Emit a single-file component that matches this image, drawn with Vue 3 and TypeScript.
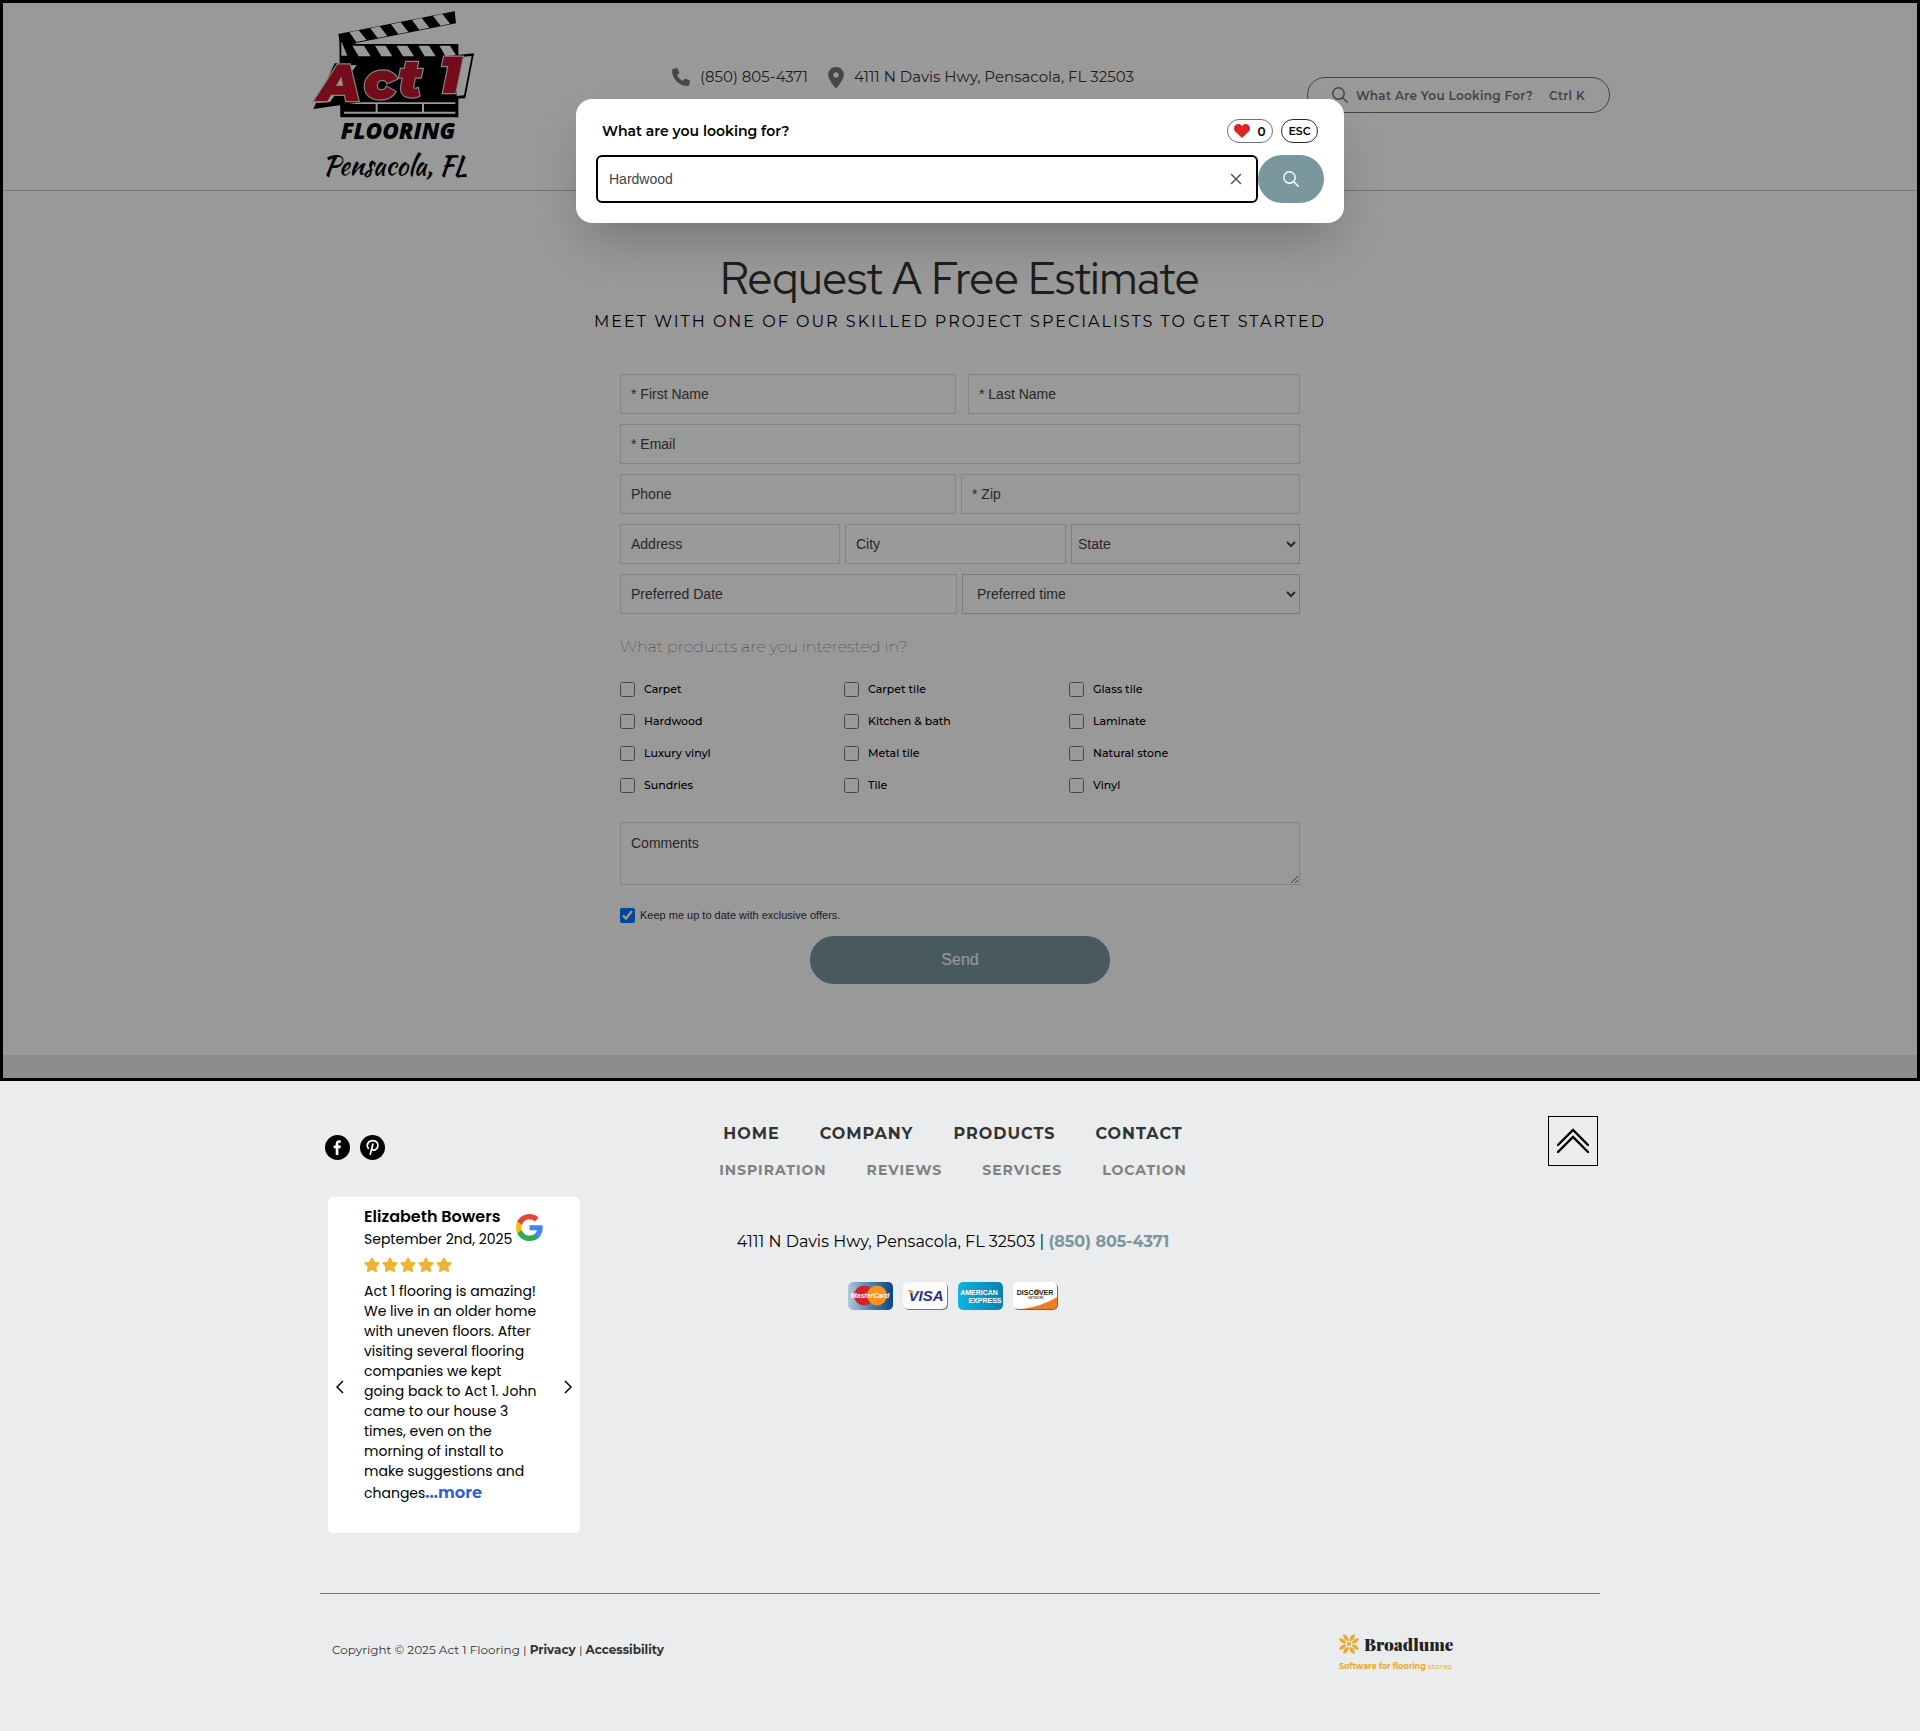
<script setup lang="ts">
import { ref } from 'vue'

interface Product {
  id: string
  label: string
}

const query = ref('Hardwood')
const optIn = ref(true)
const picked = ref<string[]>([])

const products: Product[] = [
  'Carpet', 'Carpet tile', 'Glass tile',
  'Hardwood', 'Kitchen & bath', 'Laminate',
  'Luxury vinyl', 'Metal tile', 'Natural stone',
  'Sundries', 'Tile', 'Vinyl',
].map((label, i) => ({ id: `product-${i}`, label }))

const primaryLinks = ['Home', 'Company', 'Products', 'Contact']
const secondaryLinks = ['Inspiration', 'Reviews', 'Services', 'Location']

const reviewLines = [
  'Act 1 flooring is amazing!',
  'We live in an older home',
  'with uneven floors. After',
  'visiting several flooring',
  'companies we kept',
  'going back to Act 1. John',
  'came to our house 3',
  'times, even on the',
  'morning of install to',
  'make suggestions and',
]
</script>

<template>
  <div class="page">
    <div class="stage">
      <header class="site-header">
        <div class="header-inner">
          <a href="#" class="logo" aria-label="Act 1 Flooring">
            <svg viewBox="0 0 660 600" width="220" height="200">
              <path d="M145 102 L494 34 L498 70 L152 138 Z" fill="#000" />
              <g fill="#fff">
                <path d="M178 97 l28 -6 l24 29 l-31 6 z" />
                <path d="M241 85 l28 -6 l23 29 l-29 6 z" />
                <path d="M303 73 l29 -6 l23 29 l-30 6 z" />
                <path d="M366 60 l29 -6 l23 29 l-30 6 z" />
                <path d="M429 48 l28 -6 l23 29 l-28 6 z" />
              </g>
              <path d="M148 110 L200 132 H505 V352 H151 Z" fill="#000" />
              <g fill="#fff">
                <path d="M154 124 l18 43 h-18 z" />
                <path d="M187 137 h35 l20 32 h-36 z" />
                <path d="M255 137 h32 l20 32 h-33 z" />
                <path d="M320 137 h32 l20 32 h-33 z" />
                <path d="M385 137 h32 l20 32 h-33 z" />
                <path d="M448 137 h32 l20 32 h-33 z" />
                <path d="M162 307 H496 V312 H162 Z M162 335 H496 V341 H162 Z M257 310 h6 v28 h-6 z M396 310 h6 v28 h-6 z" />
              </g>
              <path d="M134 190 L232 188 L222 305 L70 327 Z" fill="#000" />
              <path d="M139 197 L200 195 L120 306 L80 309 Z" fill="#fff" />
              <path d="M470 168 L552 160 L526 295 L440 298 Z" fill="#000" />
              <path d="M500 172 L545 168 L522 286 L500 288 Z" fill="#fff" />
              <g class="logo-act">
                <text x="84" y="304">A</text>
                <text x="221" y="297">c</text>
                <text x="324" y="290">t</text>
                <text x="448" y="280">1</text>
              </g>
              <text x="152" y="418" class="logo-flooring">FLOORING</text>
              <text x="98" y="524" class="logo-city">Pensacola, FL</text>
            </svg>
          </a>

          <div class="contact">
            <a href="#" class="contact-item">
              <svg class="phone" viewBox="0 0 512 512" width="18" height="18" fill="currentColor"><path d="M165 25c-8-19-29-29-49-24l-88 24C12 30 0 46 0 64c0 247 201 448 448 448 18 0 34-12 39-29l24-88c5-20-5-41-24-49l-96-40c-16-7-35-2-46 12l-40 49C234 334 178 278 145 207l49-40c14-11 19-30 12-46z" /></svg>
              <span>(850) 805-4371</span>
            </a>
            <a href="#" class="contact-item">
              <svg viewBox="0 0 384 512" width="16" height="21" fill="currentColor"><path fill-rule="evenodd" d="M216 499C267 435 384 279 384 192 384 86 298 0 192 0S0 86 0 192c0 87 117 243 168 307 12 16 36 16 48 0zM192 128a64 64 0 1 1 0 128 64 64 0 0 1 0-128z" /></svg>
              <span>4111 N Davis Hwy, Pensacola, FL 32503</span>
            </a>
          </div>

          <button type="button" class="search-pill">
            <svg viewBox="0 0 16 16" width="16" height="16" fill="none" stroke="currentColor" stroke-width="1.4" stroke-linecap="round"><circle cx="6.5" cy="6.5" r="5.7" /><path d="M10.7 10.7 L15.3 15.3" /></svg>
            <span>What Are You Looking For?</span>
            <span class="shortcut">Ctrl K</span>
          </button>
        </div>
      </header>

      <main class="main">
        <h1>Request A Free Estimate</h1>
        <p class="subtitle">MEET WITH ONE OF OUR SKILLED PROJECT SPECIALISTS TO GET STARTED</p>

        <form class="estimate" @submit.prevent>
          <div class="row names">
            <input type="text" placeholder="* First Name" aria-label="First Name" />
            <input type="text" placeholder="* Last Name" aria-label="Last Name" />
          </div>
          <div class="row">
            <input type="email" placeholder="* Email" aria-label="Email" />
          </div>
          <div class="row phone-zip">
            <input type="tel" placeholder="Phone" aria-label="Phone" />
            <input type="text" placeholder="* Zip" aria-label="Zip" />
          </div>
          <div class="row address">
            <input type="text" placeholder="Address" aria-label="Address" />
            <input type="text" placeholder="City" aria-label="City" />
            <select aria-label="State"><option>State</option></select>
          </div>
          <div class="row schedule">
            <input type="text" placeholder="Preferred Date" aria-label="Preferred Date" />
            <select class="time" aria-label="Preferred time"><option>Preferred time</option></select>
          </div>

          <fieldset>
            <legend>What products are you interested in?</legend>
            <div class="products">
              <div v-for="p in products" :key="p.id" class="check">
                <input :id="p.id" v-model="picked" type="checkbox" :value="p.label" />
                <label :for="p.id">{{ p.label }}</label>
              </div>
            </div>
          </fieldset>

          <textarea placeholder="Comments" aria-label="Comments"></textarea>

          <div class="check opt-in">
            <input id="opt-in" v-model="optIn" type="checkbox" />
            <label for="opt-in">Keep me up to date with exclusive offers.</label>
          </div>
          <button type="submit" class="send">Send</button>
        </form>
      </main>

      <div class="overlay">
        <div class="dialog" role="dialog" aria-label="Search">
          <div class="dialog-head">
            <label for="site-search">What are you looking for?</label>
            <div class="dialog-actions">
              <button type="button" class="favorites" aria-label="Favorites">
                <svg viewBox="0 0 16 14" width="16" height="14"><path fill="#dc2626" d="M8 14 L1.3 7.6 C-.6 5.6 -.3 2.6 1.5 1.1 C3.5 -.5 6.4 -.2 8 2.1 C9.6 -.2 12.5 -.5 14.5 1.1 C16.3 2.6 16.6 5.6 14.7 7.6 Z" /></svg>
                <span>0</span>
              </button>
              <button type="button" class="esc">ESC</button>
            </div>
          </div>
          <div class="dialog-search">
            <div class="field">
              <input id="site-search" v-model="query" type="text" />
              <button type="button" class="clear" aria-label="Clear" @click="query = ''">
                <svg viewBox="0 0 12 12" width="12" height="12" fill="none" stroke="#4b5563" stroke-width="1.5" stroke-linecap="round"><path d="M1.5 1.5 L10.5 10.5 M10.5 1.5 L1.5 10.5" /></svg>
              </button>
            </div>
            <button type="button" class="go" aria-label="Search">
              <svg viewBox="0 0 16 16" width="16" height="16" fill="none" stroke="#fff" stroke-width="1.4" stroke-linecap="round"><circle cx="6.5" cy="6.5" r="5.7" /><path d="M10.7 10.7 L15.3 15.3" /></svg>
            </button>
          </div>
        </div>
      </div>
    </div>

    <footer class="footer">
      <div class="footer-top">
        <div class="footer-left">
          <div class="social">
            <a href="#" aria-label="Facebook">
              <svg viewBox="0 0 25 25" width="25" height="25"><circle cx="12.5" cy="12.5" r="12.5" /><path fill="#fff" d="M10.7 20 V13.2 H8.7 V10.6 H10.7 V8.7 C10.7 6.5 12 5.3 14 5.3 C15 5.3 15.7 5.4 15.9 5.4 V7.7 H14.6 C13.6 7.7 13.4 8.2 13.4 8.9 V10.6 H15.8 L15.5 13.2 H13.4 V20 Z" /></svg>
            </a>
            <a href="#" aria-label="Pinterest">
              <svg viewBox="0 0 25 25" width="25" height="25"><circle cx="12.5" cy="12.5" r="12.5" /><path fill="none" stroke="#fff" stroke-width="1.7" stroke-linecap="round" d="M8.3 13.3 C5.8 9.5 8.5 5.7 12.8 5.7 C16.7 5.7 18.6 8.6 17.7 11.8 C16.9 14.9 13.5 16.2 11.9 13.9 M12.9 9 L10.3 19.3" /></svg>
            </a>
          </div>

          <article class="review">
            <button type="button" class="arrow" aria-label="Previous review">
              <svg viewBox="0 0 8 14" width="8" height="14"><path d="M7 1 L1 7 L7 13" /></svg>
            </button>
            <div class="review-body">
              <div class="review-head">
                <div>
                  <h2>Elizabeth Bowers</h2>
                  <time datetime="2025-09-02">September 2nd, 2025</time>
                </div>
                <svg class="google" viewBox="0 0 48 48" width="27" height="27">
                  <path fill="#4285f4" d="M47.5 24.5c0-1.6-.1-3.2-.4-4.7H24v9h13.2c-.6 3-2.3 5.6-4.9 7.3v6h7.9c4.6-4.2 7.3-10.5 7.3-17.6z" />
                  <path fill="#34a853" d="M24 48c6.6 0 12.2-2.2 16.2-5.9l-7.9-6c-2.2 1.5-5 2.3-8.3 2.3-6.4 0-11.8-4.3-13.7-10.1H2.2v6.2C6.2 42.6 14.5 48 24 48z" />
                  <path fill="#fbbc05" d="M10.3 28.3c-.5-1.5-.8-2.9-.8-4.3s.3-2.9.8-4.3v-6.2H2.2C.8 16.7 0 20.2 0 24s.8 7.3 2.2 10.5z" />
                  <path fill="#ea4335" d="M24 9.5c3.6 0 6.8 1.2 9.3 3.7l7-7C36.2 2.4 30.6 0 24 0 14.5 0 6.2 5.4 2.2 13.5l8.1 6.2C12.2 13.8 17.6 9.5 24 9.5z" />
                </svg>
              </div>
              <div class="stars" role="img" aria-label="5 out of 5">
                <svg v-for="n in 5" :key="n" viewBox="0 0 16 16" width="16" height="16"><path fill="#eeb333" stroke="#eeb333" stroke-width="2" stroke-linejoin="round" d="M8 1.5 L10 5.7 L14.6 6.3 L11.3 9.5 L12.1 14.1 L8 11.9 L3.9 14.1 L4.7 9.5 L1.4 6.3 L6 5.7 Z" /></svg>
              </div>
              <p><template v-for="line in reviewLines" :key="line">{{ line }}<br /></template><span>changes</span><a href="#">...more</a></p>
            </div>
            <button type="button" class="arrow" aria-label="Next review">
              <svg viewBox="0 0 8 14" width="8" height="14"><path d="M1 1 L7 7 L1 13" /></svg>
            </button>
          </article>
        </div>

        <div class="footer-center">
          <nav class="primary">
            <a v-for="l in primaryLinks" :key="l" href="#">{{ l }}</a>
          </nav>
          <nav class="secondary">
            <a v-for="l in secondaryLinks" :key="l" href="#">{{ l }}</a>
          </nav>
          <p class="where">4111 N Davis Hwy, Pensacola, FL 32503 | <a href="#">(850) 805-4371</a></p>
          <div class="cards">
            <svg viewBox="0 0 45 28" width="45" height="28" role="img" aria-label="MasterCard">
              <defs><linearGradient id="mc"><stop offset="0" stop-color="#b5c6dc" /><stop offset=".5" stop-color="#4f7fae" /><stop offset="1" stop-color="#0b4781" /></linearGradient></defs>
              <rect width="45" height="28" rx="5" fill="url(#mc)" />
              <circle cx="16" cy="13.5" r="10" fill="#d2232a" /><circle cx="29" cy="13.5" r="10" fill="#f7941d" />
              <text x="22" y="16" class="mc">MasterCard</text>
            </svg>
            <svg viewBox="0 0 45 28" width="45" height="28" role="img" aria-label="Visa">
              <rect x="1" y="1" width="44" height="27" rx="5" fill="#777" /><rect width="44" height="27" rx="5" fill="#fbfbfc" />
              <text x="23" y="19" class="visa">VISA</text><path d="M4 8 L9 8 L11 13 Z" fill="#f0a32b" />
            </svg>
            <svg viewBox="0 0 45 28" width="45" height="28" role="img" aria-label="American Express">
              <defs><linearGradient id="ax"><stop offset="0" stop-color="#12b4e2" /><stop offset="1" stop-color="#0b7fae" /></linearGradient></defs>
              <rect width="45" height="28" rx="5" fill="url(#ax)" />
              <text x="21" y="13" class="amex">AMERICAN</text><text x="27" y="21" class="amex">EXPRESS</text>
            </svg>
            <svg viewBox="0 0 45 28" width="45" height="28" role="img" aria-label="Discover">
              <rect x="1" y="1" width="44" height="27" rx="5" fill="#666" /><rect width="44" height="27" rx="5" fill="#fff" />
              <path d="M9 27 Q30 24 44 15 V22 Q44 27 39 27 Z" fill="#ef7b22" />
              <circle cx="24" cy="10" r="3" fill="#f39a4e" />
              <text x="22" y="13" class="discover">DISCOVER</text><text x="23" y="17" class="network">NETWORK</text>
            </svg>
          </div>
        </div>

        <a href="#" class="to-top" aria-label="Back to top">
          <svg viewBox="0 0 32 26" width="32" height="26" fill="none" stroke="#000" stroke-width="2.4" stroke-linecap="round"><path d="M1 17 L16 2 L31 17 M1 24 L16 9 L31 24" /></svg>
        </a>
      </div>

      <div class="footer-bottom">
        <p>Copyright © 2025 Act 1 Flooring | <a href="#">Privacy</a> | <a href="#">Accessibility</a></p>
        <a href="#" class="broadlume">
          <span class="brand">
            <svg viewBox="0 0 20 20" width="20" height="20" fill="#e9a92f">
              <rect x="8.2" y="8.2" width="3.6" height="3.6" />
              <g v-for="a in [0, 90, 180, 270]" :key="a" :transform="`rotate(${a} 10 10)`">
                <path d="M9.5 7 C6 7 3.8 3.2 4.2 .2 C7.6 .4 10 3.5 9.5 7 Z" />
                <path d="M10.5 7 C14 7 16.2 3.2 15.8 .2 C12.4 .4 10 3.5 10.5 7 Z" />
              </g>
            </svg>
            <span>Broadlume</span>
          </span>
          <span class="tagline"><b>Software for flooring</b> stores</span>
        </a>
      </div>
    </footer>
  </div>
</template>

<style>
body {
  margin: 0;
}
</style>

<style scoped>
* {
  box-sizing: border-box;
}
.page {
  font-family: Montserrat, Inter, sans-serif;
  color: #000;
  background: #ebeced;
}
.page a {
  color: inherit;
  text-decoration: none;
}
button {
  font-family: inherit;
  cursor: pointer;
}
h1, h2, p {
  margin: 0;
}

/* header */
.stage {
  position: relative;
  padding-bottom: 26px;
}
.site-header {
  background: #fff;
  border-bottom: 1px solid #c4c4c4;
}
.header-inner {
  max-width: 1340px;
  margin: 0 auto;
  padding-right: 20px;
  height: 190px;
  overflow: hidden;
  display: grid;
  grid-template-columns: 382px 1fr auto;
  align-items: start;
}
.logo-act text {
  font: italic 900 158px Montserrat, sans-serif;
  fill: #c3142b;
  stroke: #ddd;
  stroke-width: 7px;
  paint-order: stroke;
}
.logo-flooring {
  font: italic 800 68px "Open Sans", sans-serif;
}
.logo-city {
  font: 400 79px "Kaushan Script", "Dancing Script", Pacifico, "Liberation Serif", cursive;
}
.contact {
  display: flex;
  gap: 20px;
  padding-top: 65px;
  color: #333;
  font-size: 15px;
  line-height: 24px;
}
.contact-item {
  display: flex;
  align-items: center;
  gap: 10px;
}
.contact-item svg {
  color: #777;
}
.search-pill {
  display: flex;
  align-items: center;
  gap: 8px;
  height: 36px;
  margin-top: 77px;
  padding: 0 24px;
  border: 1px solid #6b7280;
  border-radius: 18px;
  background: none;
  color: #6b7280;
  font-size: 12px;
  font-weight: 600;
  letter-spacing: 0.025em;
}
.shortcut {
  margin-left: 8px;
}

/* estimate form */
.main {
  background: #fff;
  padding: 59px 20px 71px;
  display: flex;
  flex-direction: column;
  align-items: center;
}
h1 {
  font: 400 44px/56px "Red Hat Display", Lato, sans-serif;
  color: #333;
}
.subtitle {
  margin-top: 4px;
  font-size: 16px;
  line-height: 24px;
  letter-spacing: 2px;
}
.estimate {
  width: 100%;
  max-width: 680px;
  margin-top: 40px;
  display: flex;
  flex-direction: column;
}
.row {
  display: grid;
  grid-auto-flow: column;
  grid-auto-columns: 1fr;
  gap: 5px;
  margin-bottom: 10px;
}
.row.names {
  grid-template-columns: 336px 1fr;
  gap: 12px;
}
.row.phone-zip {
  grid-template-columns: 336px 1fr;
}
.row.address {
  grid-template-columns: 220px 221px 1fr;
}
.row.schedule {
  grid-template-columns: 337px 1fr;
}
.row input, .row select, textarea {
  font: 14px "Liberation Sans", Arial, sans-serif;
  color: #444;
  background: #fff;
  border: 1px solid #ddd;
  border-radius: 0;
  height: 40px;
  min-width: 0;
  padding: 0 10px;
}
.row select {
  border-color: #ccc;
  padding: 0 2px;
}
.row select.time {
  padding: 0 10px;
}
::placeholder {
  color: #444;
  opacity: 1;
}
fieldset {
  border: 0;
  margin: 11px 0 0;
  padding: 0;
}
legend {
  padding: 0;
  margin-bottom: 14px;
  font-size: 16px;
  font-weight: 100;
  line-height: 24px;
  color: #333;
}
.products {
  display: grid;
  grid-template-columns: 224px 225px 1fr;
}
.check {
  display: flex;
  align-items: center;
  height: 32px;
  gap: 9px;
  font-size: 11px;
  font-weight: 500;
}
.check input {
  width: 15px;
  height: 15px;
  margin: 0;
}
textarea {
  height: 63px;
  padding: 12px 10px;
  margin-top: 21px;
}
.check.opt-in {
  gap: 5px;
  margin: 14px 0 5px;
  font-family: "Liberation Sans", Arial, sans-serif;
  font-weight: 400;
  color: #333;
}
.send {
  width: 300px;
  height: 48px;
  align-self: center;
  border: 0;
  border-radius: 24px;
  background: #7a979f;
  color: #fff;
  font: 16px "Liberation Sans", Arial, sans-serif;
}

/* search overlay */
.overlay {
  position: absolute;
  inset: 0;
  border: 3px solid #000;
  background: rgba(0, 0, 0, 0.4);
  padding: 96px 20px 0;
}
.dialog {
  max-width: 768px;
  margin: 0 auto;
  padding: 20px;
  background: #fff;
  border-radius: 16px;
  box-shadow: 0 25px 50px -12px rgba(0, 0, 0, 0.25);
}
.dialog-head {
  display: flex;
  align-items: center;
  justify-content: space-between;
  height: 24px;
  margin: 0 6px 12px;
  font-size: 14px;
  font-weight: 600;
}
.dialog-actions {
  display: flex;
  gap: 8px;
}
.dialog-actions button {
  display: flex;
  align-items: center;
  justify-content: center;
  height: 24px;
  border: 1px solid #6b7280;
  border-radius: 12px;
  background: #fff;
  color: #000;
  font-size: 12px;
  font-weight: 600;
  padding: 0 6px;
}
.dialog-actions .favorites {
  gap: 7px;
  width: 46px;
}
.dialog-actions .esc {
  width: 37px;
  border-color: #1f2937;
  font-size: 11px;
}
.dialog-search {
  display: flex;
}
.field {
  flex: 1;
  display: flex;
  align-items: center;
  height: 48px;
  border: 2px solid #000;
  border-radius: 6px;
}
.field input {
  flex: 1;
  border: 0;
  outline: 0;
  padding: 0 11px;
  background: none;
  font: 14px "Liberation Sans", Arial, sans-serif;
  color: #444;
}
.clear {
  display: flex;
  border: 0;
  background: none;
  padding: 0 14px;
}
.go {
  width: 66px;
  display: flex;
  align-items: center;
  justify-content: center;
  border: 0;
  border-radius: 24px;
  background: #7a979f;
}

/* footer */
.footer {
  max-width: 1280px;
  margin: 0 auto;
}
.footer-top {
  display: grid;
  grid-template-columns: 300px 1fr 314px;
  padding: 35px 0 60px;
  border-bottom: 1px solid #73767b;
}
.social {
  display: flex;
  gap: 10px;
  padding: 19px 5px 37px;
}
.social svg {
  display: block;
}
.review {
  width: 252px;
  height: 336px;
  margin-left: 8px;
  padding: 0 8px;
  display: flex;
  align-items: center;
  background: #fff;
  border-radius: 5px;
  font-family: Poppins, Inter, sans-serif;
}
.arrow {
  border: 0;
  background: none;
  padding: 44px 0 0;
  line-height: 0;
}
.arrow path {
  fill: none;
  stroke: #000;
  stroke-width: 1.5;
}
.review-body {
  flex: 1;
  align-self: flex-start;
  padding: 8px 0 0 20px;
}
.review-head {
  display: flex;
  gap: 4px;
  align-items: center;
  white-space: nowrap;
}
.review-head > div {
  width: 148px;
}
h2 {
  font-size: 16px;
  font-weight: 600;
  line-height: 24px;
}
time {
  display: block;
  font-size: 14px;
  line-height: 20px;
}
.stars {
  display: flex;
  gap: 2px;
  padding: 8px 0;
}
.review p {
  font-size: 14px;
  line-height: 20px;
  white-space: nowrap;
}
.review p a {
  color: #2b5fd9;
  font-family: Montserrat, Inter, sans-serif;
  font-size: 16px;
  font-weight: 700;
  line-height: 24px;
}
.footer-center {
  display: flex;
  flex-direction: column;
  align-items: center;
  padding-top: 5px;
}
nav {
  display: flex;
  gap: 40px;
  text-transform: uppercase;
  font-weight: 700;
  letter-spacing: 1px;
}
.primary {
  font-size: 16px;
  line-height: 26px;
  color: #333;
}
.page .secondary {
  margin-top: 11px;
  font-size: 14px;
  line-height: 24px;
  color: #808080;
}
.where {
  margin-top: 48px;
  font-size: 16px;
  line-height: 24px;
}
.page .where a {
  color: #7a979f;
  font-weight: 700;
}
.cards {
  display: flex;
  gap: 10px;
  margin-top: 28px;
}
.cards text {
  text-anchor: middle;
  font-family: "Liberation Sans", Arial, sans-serif;
  font-weight: 700;
}
.cards .mc {
  font-size: 7px;
  font-style: italic;
  fill: #fff;
}
.cards .visa {
  font-size: 15px;
  font-style: italic;
  fill: #2b2f86;
}
.cards .amex {
  font-size: 7px;
  fill: #fff;
}
.cards .discover {
  font-size: 7px;
  fill: #222;
}
.cards .network {
  font-size: 3px;
  fill: #555;
}
.to-top {
  width: 50px;
  height: 50px;
  justify-self: end;
  margin-right: 2px;
  display: flex;
  align-items: center;
  justify-content: center;
  border: 1px solid #000;
}
.footer-bottom {
  display: flex;
  justify-content: space-between;
  align-items: flex-start;
  height: 139px;
  padding: 38px 148px 0 12px;
}
.footer-bottom p {
  font-size: 12px;
  line-height: 36px;
  color: #333;
}
.footer-bottom p a {
  font-weight: 700;
}
.broadlume {
  display: flex;
  flex-direction: column;
  width: 113px;
}
.brand {
  display: flex;
  align-items: center;
  gap: 5px;
  height: 24px;
  font: 900 17px/24px "Playfair Display", "Liberation Serif", serif;
  color: #222;
}
.brand svg {
  flex: none;
}
.tagline {
  margin-top: 3px;
  font: 8px/14px Montserrat, sans-serif;
  color: #e9a92f;
  white-space: nowrap;
}
.tagline b {
  font-weight: 700;
}
</style>
